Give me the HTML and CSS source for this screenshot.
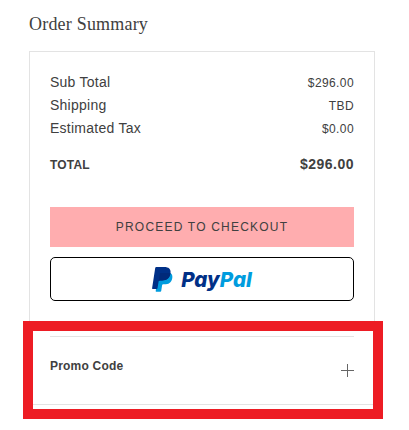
FILE: index.html
```html
<!DOCTYPE html>
<html lang="en">
<head>
  <meta charset="UTF-8">
  <title>Order Summary</title>
  <meta name="viewport" content="width=device-width, initial-scale=1.0">
  <link rel="stylesheet" href="styles.css">
</head>
<body>
  <main class="summary">
    <h2 class="summary-title">Order Summary</h2>

    <section class="summary-box">
      <div class="row"><span class="label">Sub Total</span><span class="price">$296.00</span></div>
      <div class="row"><span class="label">Shipping</span><span class="price">TBD</span></div>
      <div class="row"><span class="label">Estimated Tax</span><span class="price">$0.00</span></div>
      <div class="row total"><span class="total-label">TOTAL</span><span class="total-price">$296.00</span></div>

      <button class="checkout" type="button">PROCEED TO CHECKOUT</button>
      <button class="paypal" type="button">
        <svg class="paypal-mark" width="21" height="25" viewBox="0 0 21 25">
          <path fill="#009cde" d="M18.800 6.200c1.500 1.200 1.900 3 1.400 5.200-.9 4.300-3.800 5.900-7.700 5.900h-1.300c-.6 0-1 .4-1.100 1l-.9 5.600c-.1.500-.4.800-.9.800H4.200c-.4 0-.6-.3-.5-.7L6 8z"/>
          <path fill="#003087" d="M4.300 0h8c4.300 0 6.900 2 6.200 6.200-.8 5-3.900 7.200-8.500 7.200H7.800c-.7 0-1.100.4-1.200 1l-1.100 6.900c-.1.500-.3.700-.8.700H.6c-.4 0-.6-.3-.5-.7L3.200 1C3.300.3 3.700 0 4.300 0z"/>
          <path fill="#012a7a" d="M18.500 6.200c-.8 5-3.900 7.200-8.500 7.200H7.800c-.5 0-.9.300-1.100.7L7.800 7c.1-.7.600-1.100 1.200-1.100h6c1.400 0 2.600.1 3.500.3z"/>
        </svg>
        <span class="paypal-text">Pay<span class="pal">Pal</span></span>
      </button>

      <div class="promo">
        <span class="promo-label">Promo Code</span>
        <svg class="plus" width="13" height="13" viewBox="0 0 13 13">
          <path d="M6.500 0v13M0 6.500h13" stroke="#666" fill="none"/>
        </svg>
      </div>
      <div class="highlight"></div>
    </section>
  </main>
</body>
</html>
```
FILE: styles.css
```css
* {
  box-sizing: border-box;
}

body {
  margin: 0;
  background: #fff;
  color: #404040;
  font-family: "Liberation Sans", Arial, sans-serif;
}

.summary {
  width: 375px;
  height: 430px;
  padding: 12px 0 0 29px;
}

.summary-title {
  margin: 0 0 15px;
  font-family: "Liberation Serif", "Times New Roman", serif;
  font-size: 18px;
  font-weight: normal;
  line-height: 24px;
  letter-spacing: 0.2px;
}

.summary-box {
  position: relative;
  height: 354px;
  padding: 19px 20px 0;
  border: 1px solid #e3e3e3;
}

.row {
  display: flex;
  justify-content: space-between;
  align-items: baseline;
  height: 23px;
  line-height: 23px;
}

.label {
  font-size: 14px;
  letter-spacing: 0.25px;
}

.price {
  font-size: 12px;
  letter-spacing: 0.4px;
}

.total {
  margin-top: 13px;
}

.total-label {
  font-size: 12px;
  font-weight: bold;
  letter-spacing: 0.2px;
}

.total-price {
  font-size: 14px;
  font-weight: bold;
  letter-spacing: 0.5px;
}

.checkout {
  display: block;
  width: 100%;
  height: 40px;
  margin-top: 31px;
  padding: 0;
  border: 0;
  background: #ffadaf;
  color: #404040;
  font-family: inherit;
  font-size: 12px;
  letter-spacing: 1.2px;
}

.paypal {
  display: flex;
  align-items: center;
  justify-content: center;
  gap: 8px;
  width: 100%;
  height: 44px;
  margin-top: 10px;
  padding: 0;
  border: 1px solid #000;
  border-radius: 5px;
  background: #fff;
}

.paypal-text {
  padding-top: 1px;
  color: #003087;
  font-family: Inter, Lato, sans-serif;
  font-feature-settings: "cv11";
  font-size: 20.5px;
  font-style: italic;
  font-weight: 800;
  line-height: 24px;
}

.pal {
  color: #009cde;
}

.promo {
  display: flex;
  justify-content: space-between;
  height: 68px;
  margin-top: 35px;
  border-top: 1px solid #e3e3e3;
}

.promo-label {
  padding-top: 21px;
  font-size: 12px;
  font-weight: bold;
  line-height: 16px;
  letter-spacing: 0.2px;
}

.plus {
  margin-top: 27px;
}

/* red frame around the promo code area */
.highlight {
  position: absolute;
  top: 269px;
  left: -7px;
  width: 360px;
  height: 98px;
  border: 10px solid #ed1c24;
}
```
